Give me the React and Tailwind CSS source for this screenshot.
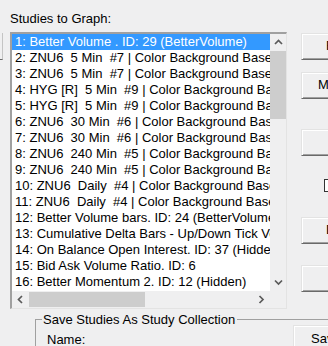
import React from 'react';

const rows = [
  '1: Better Volume . ID: 29 (BetterVolume)',
  '2: ZNU6  5 Min  #7 | Color Background Based Bars',
  '3: ZNU6  5 Min  #7 | Color Background Based Bars',
  '4: HYG [R]  5 Min  #9 | Color Background Based Bars',
  '5: HYG [R]  5 Min  #9 | Color Background Based Bars',
  '6: ZNU6  30 Min  #6 | Color Background Based Bars',
  '7: ZNU6  30 Min  #6 | Color Background Based Bars',
  '8: ZNU6  240 Min  #5 | Color Background Based Bars',
  '9: ZNU6  240 Min  #5 | Color Background Based Bars',
  '10: ZNU6  Daily  #4 | Color Background Based Bars',
  '11: ZNU6  Daily  #4 | Color Background Based Bars',
  '12: Better Volume bars. ID: 24 (BetterVolume)',
  '13: Cumulative Delta Bars - Up/Down Tick Volume',
  '14: On Balance Open Interest. ID: 37 (Hidden)',
  '15: Bid Ask Volume Ratio. ID: 6',
  '16: Better Momentum 2. ID: 12 (Hidden)',
];

const Chevron = ({ dir }) => {
  const vertical = dir === 'up' || dir === 'down';
  const d = {
    up: 'M1 5L4.5 1.5L8 5',
    down: 'M1 1.5L4.5 5L8 1.5',
    left: 'M5 1L1.5 4.5L5 8',
    right: 'M1.5 1L5 4.5L1.5 8',
  }[dir];
  return (
    <svg width={vertical ? 9 : 7} height={vertical ? 7 : 9} viewBox={vertical ? '0 0 9 7' : '0 0 7 9'}>
      <path d={d} fill="none" stroke="#5a5a5a" strokeWidth="1.7" />
    </svg>
  );
};

const btn =
  'shrink-0 h-[27px] w-[60px] whitespace-nowrap overflow-hidden border-t border-l border-b border-t-[#e3e3e3] border-l-[#e3e3e3] border-b-[#696969] shadow-[inset_1px_1px_0_#ffffff,inset_0_-1px_0_#a0a0a0]';

const App = () => {
  return (
    <div className="w-[328px] h-[346px] overflow-hidden bg-[#efeff0] font-['Liberation_Sans',Arial,sans-serif] text-[13px] leading-[15px] text-black">
      <div className="flex items-start h-[309px]">
        {/* cut-off button on the left edge */}
        <div className="shrink-0 mt-[33px] w-[3px] h-[27px] border-r border-b border-r-[#c4c4c4] border-b-[#696969]" />

        <div className="shrink-0 ml-[7px] w-[277px]">
          <div className="mt-[11px] h-[15px] whitespace-nowrap">Studies to Graph:</div>

          <div className="mt-[6px] h-[277px] flex flex-col bg-white border-t-2 border-l-2 border-r border-b border-t-[#a0a0a0] border-l-[#a0a0a0] border-r-[#e3e3e3] border-b-[#e3e3e3]">
            <div className="flex h-[257px]">
              <div className="w-[258px] overflow-hidden">
                {rows.map((r, i) => (
                  <div
                    key={i}
                    className={
                      i === 0
                        ? 'h-[16px] leading-[16px] pl-[3px] whitespace-pre bg-[#3399ff] text-white'
                        : 'h-[16px] leading-[16px] pl-[3px] whitespace-pre'
                    }
                  >
                    {r}
                  </div>
                ))}
              </div>
              <div className="w-[16px] flex flex-col bg-[#efeff0]">
                <div className="h-[17px] flex items-center justify-center">
                  <Chevron dir="up" />
                </div>
                <div className="h-[68px] bg-[#cdcdcd]" />
                <div className="flex-1" />
                <div className="h-[17px] flex items-center justify-center">
                  <Chevron dir="down" />
                </div>
              </div>
            </div>
            <div className="flex h-[17px] bg-[#efeff0]">
              <div className="w-[17px] flex items-center justify-center">
                <Chevron dir="left" />
              </div>
              <div className="w-[116px] my-[1px] bg-[#cdcdcd]" />
              <div className="flex-1" />
              <div className="w-[17px] flex items-center justify-center">
                <Chevron dir="right" />
              </div>
              <div className="w-[16px]" />
            </div>
          </div>
        </div>

        <div className="shrink-0 ml-[14px] mt-[33px] flex flex-col">
          <div className={`${btn} flex items-center pl-[24px] pb-[2px]`}>Remove</div>
          <div className={`${btn} mt-[12px] flex items-center pl-[16px] pb-[3px]`}>Move Up</div>
          <div className={`${btn} mt-[30px]`} />
          <div className="shrink-0 ml-[23px] mt-[23px] w-[13px] h-[13px] border border-[#333333] bg-white" />
          <div className={`${btn} mt-[25px] flex items-center pl-[24px] pb-[2px]`}>Delete</div>
          <div className={`${btn} mt-[21px] h-[26px]`} />
        </div>
      </div>

      <div className="ml-[35px] mt-[3px] w-[330px]">
        <div className="flex items-center h-[15px]">
          <div className="self-end w-[7px] h-[8px] border-t border-l border-[#a0a0a0]" />
          <span className="pl-[1px] whitespace-nowrap">Save Studies As Study Collection</span>
          <div className="ml-[2px] flex-1 h-px bg-[#a0a0a0]" />
        </div>
        <div className="flex h-[40px] border-l border-[#a0a0a0]">
          <div className="shrink-0 w-[257px] pl-[11px] pt-[5px]">Name:</div>
          <div className={`${btn} -mt-[2px] pl-[17px] pt-[5px]`}>Save</div>
        </div>
      </div>
    </div>
  );
};

export default App;
